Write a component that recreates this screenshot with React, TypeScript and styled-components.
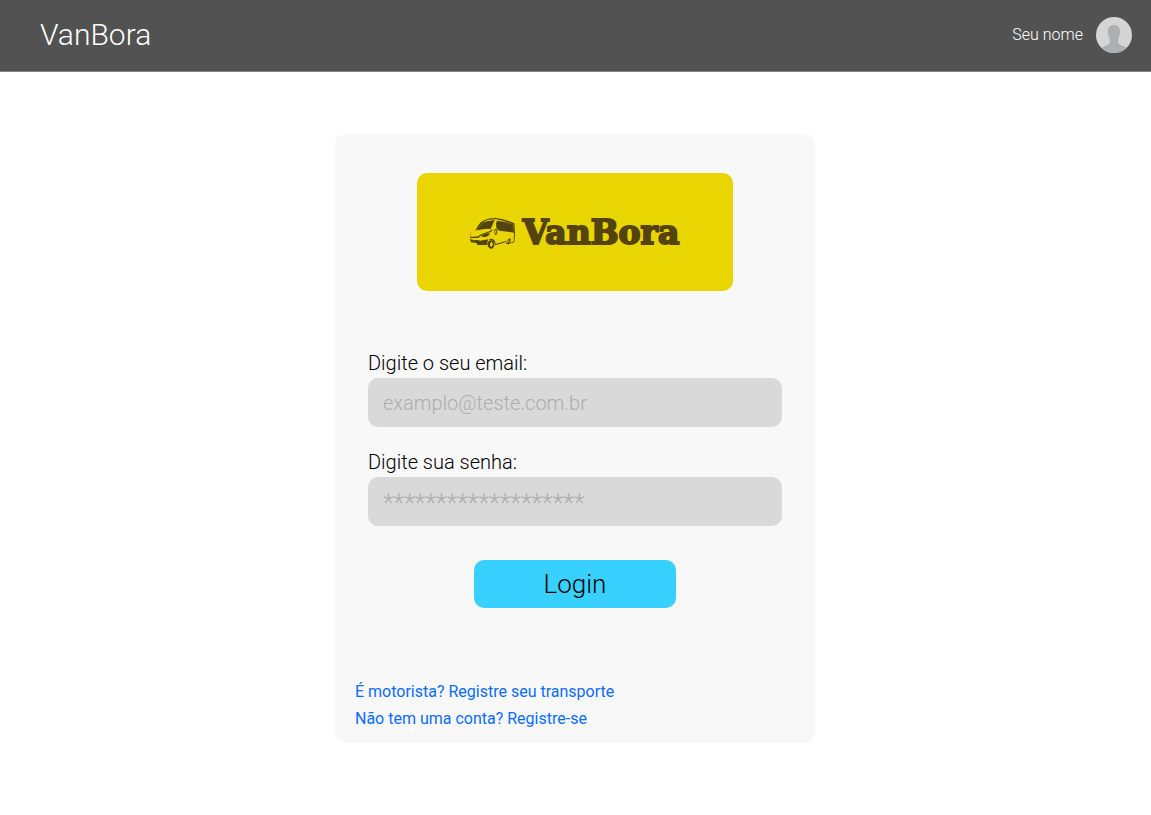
import React from "react";
import styled, { createGlobalStyle } from "styled-components";

const GlobalStyle = createGlobalStyle`
  *, *::before, *::after { box-sizing: border-box; }
  body {
    margin: 0;
    background: #fff;
    color: #000;
    font-family: Roboto, "Liberation Sans", sans-serif;
    font-weight: 300;
  }
`;

const Header = styled.header`
  display: flex;
  align-items: center;
  justify-content: space-between;
  height: 72px;
  padding: 0 19px 2px 40px;
  background: #525252;
  border-bottom: 1px solid #8a8585;
  color: #fff;
`;

const Brand = styled.h1`
  margin: 0;
  font-size: 30px;
  line-height: 36px;
  font-weight: 300;
`;

const User = styled.div`
  display: flex;
  align-items: center;
  gap: 13px;
  font-size: 16px;
  line-height: 20px;
`;

const Avatar = styled.svg`
  display: block;
  width: 36px;
  height: 36px;
`;

const Main = styled.main`
  display: flex;
  justify-content: center;
  padding: 62px 17px 62px 16px;
`;

const Card = styled.section`
  display: flex;
  flex-direction: column;
  width: 100%;
  max-width: 480px;
  padding: 39px 20px 11px;
  border-radius: 10px;
  background: #f8f8f8;
`;

const Banner = styled.div`
  display: flex;
  align-items: center;
  justify-content: center;
  gap: 7px;
  align-self: center;
  width: 100%;
  max-width: 316px;
  height: 118px;
  padding: 2px 2px 0 0;
  border-radius: 10px;
  background: #e9d502;
  color: #54430f;
`;

const Van = styled.svg`
  width: 47px;
  height: 32px;
`;

const LogoText = styled.span`
  font-family: "DejaVu Serif", serif;
  font-size: 33px;
  line-height: 40px;
  font-weight: 700;
  -webkit-text-stroke: 2px currentColor;
`;

const Form = styled.form`
  display: flex;
  flex-direction: column;
  gap: 22px;
  padding: 59px 13px 0;
`;

const Field = styled.div`
  display: flex;
  flex-direction: column;
  gap: 2px;
`;

const Label = styled.label`
  font-size: 20px;
  line-height: 26px;
`;

const Input = styled.input`
  width: 100%;
  height: 49px;
  padding: 0 15px;
  border: 0;
  border-radius: 10px;
  background: #d9d9d9;
  color: #000;
  font: inherit;
  font-size: 20px;
  &::placeholder { color: #adadad; opacity: 1; }
  &[type="password"] {
    padding-top: 3px;
    font-size: 25px;
  }
`;

const LoginButton = styled.button`
  align-self: center;
  width: 202px;
  height: 48px;
  margin-top: 12px;
  padding: 0;
  border: 0;
  border-radius: 10px;
  background: #38d0ff;
  color: #000;
  font: inherit;
  font-size: 26px;
  cursor: pointer;
`;

const Links = styled.nav`
  display: flex;
  flex-direction: column;
  align-items: flex-start;
  padding-top: 70px;
`;

const TextLink = styled.a`
  color: #0a6cff;
  font-size: 16px;
  line-height: 27px;
  font-weight: 400;
  text-decoration: none;
`;

export default function App() {
  return (
    <>
      <GlobalStyle />
      <Header>
        <Brand>VanBora</Brand>
        <User>
          <span>Seu nome</span>
          <Avatar viewBox="0 0 36 36" aria-hidden="true">
            <clipPath id="avatar-clip">
              <circle cx="18" cy="18" r="18" />
            </clipPath>
            <g clipPath="url(#avatar-clip)">
              <rect width="36" height="36" fill="#d5d5d5" />
              <path
                fill="#adafb0"
                d="M18 8c-4.300 0-6.200 2.700-6 6.500-.8.300-.4 3 .6 3.600.3 2 .7 3.300 1.200 4.300V26c-.8 2.200-4 2.400-7.800 4.500V36h24v-5.500C26.200 28.400 23 28.200 22.200 26v-3.600c.5-1 .9-2.300 1.200-4.300 1-.6 1.400-3.300.6-3.600.2-3.800-1.700-6.500-6-6.500z"
              />
            </g>
          </Avatar>
        </User>
      </Header>
      <Main>
        <Card>
          <Banner>
            <Van viewBox="21 24 141 96" fill="currentColor" aria-hidden="true">
              <path d="M40 65 Q51 42 62 36 Q78 27 100 27 Q132 31 157 43 L159 72 L157 99 L155 99 L156 72 L154 47 Q128 35 103 31 Q81 30 67 37 Q54 49 45 63z" />
              <path d="M45 64 Q55 46 68 38 L98 33 L86 60 Q72 57 45 64z" />
              <path d="M105 35 Q132 37 154 47 L156 71 L112 65 L104 60 L102 44z" />
              <path d="M97 62 Q104 57 106 67 Q106 77 101 78 Q96 75 97 62z M99 64 Q98 71 101 74 Q104 71 103 65z" fillRule="evenodd" />
              <path d="M29 68 Q25 79 27 84 L49 82 Q52 79 54 77 L84 66 L90 61 L92 64 L86 69 L56 80 L50 86 L25 88 Q24 77 29 68z" />
              <path d="M57 83 Q65 74 84 73 Q81 82 70 84z" />
              <path d="M24 90 L36 94 Q49 92 54 95 L79 91 Q75 99 76 108 L46 108 L44 102 L27 100z" />
              <path fillRule="evenodd" d="M81 95 Q91 91 96 100 Q100 114 90 119 Q80 120 77 109 Q76 99 81 95z M89 98 Q82 102 84 110 Q88 116 92 109 Q94 101 89 98z" />
              <path d="M82 91 Q94 86 99 97 L101 105 L131 96 L131 99 L100 109 Q96 91 82 94z" />
              <path d="M131 100 Q136 89 145 88 Q148 96 141 103 L156 97 L156 100 L138 106 L130 104 L136 101 Q142 97 142 92 Q136 94 134 100z" />
            </Van>
            <LogoText>VanBora</LogoText>
          </Banner>
          <Form onSubmit={(event) => event.preventDefault()}>
            <Field>
              <Label htmlFor="email">Digite o seu email:</Label>
              <Input id="email" type="email" placeholder="examplo@teste.com.br" />
            </Field>
            <Field>
              <Label htmlFor="senha">Digite sua senha:</Label>
              <Input id="senha" type="password" placeholder="*******************" />
            </Field>
            <LoginButton type="submit">Login</LoginButton>
          </Form>
          <Links>
            <TextLink href="#motorista">É motorista? Registre seu transporte</TextLink>
            <TextLink href="#registro">Não tem uma conta? Registre-se</TextLink>
          </Links>
        </Card>
      </Main>
    </>
  );
}
